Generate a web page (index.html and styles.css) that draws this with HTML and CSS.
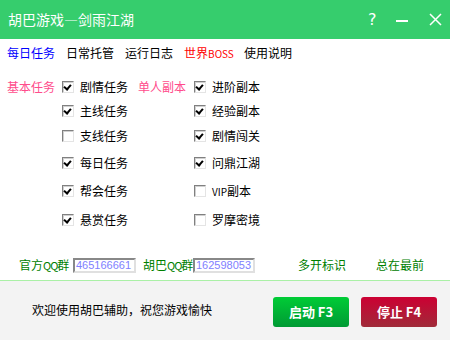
FILE: index.html
```html
<!DOCTYPE html>
<html lang="zh">
<head>
<meta charset="utf-8">
<title>胡巴游戏—剑雨江湖</title>
<link rel="stylesheet" href="styles.css">
</head>
<body>
<div class="window">
  <header class="titlebar">
    <span class="title">胡巴游戏—剑雨江湖</span>
    <div class="controls">
      <span class="help">?</span>
      <svg class="ctl" width="12" height="12" viewBox="0 0 12 12"><path d="M0 7h12" stroke="#fff" stroke-width="2"/></svg>
      <svg class="ctl" width="13" height="13" viewBox="0 0 13 13"><path d="M1 1L12 12M12 1L1 12" stroke="#fff" stroke-width="1.5"/></svg>
    </div>
  </header>
  <nav class="menu">
    <span class="tab active">每日任务</span>
    <span class="tab">日常托管</span>
    <span class="tab">运行日志</span>
    <span class="tab boss">世界<span class="lat">BOSS</span></span>
    <span class="tab">使用说明</span>
  </nav>
  <section class="tasks">
    <span class="group">基本任务</span>
    <label class="item"><span class="cb on"></span>剧情任务</label>
    <span class="group">单人副本</span>
    <label class="item"><span class="cb on"></span>进阶副本</label>

    <span></span>
    <label class="item"><span class="cb on"></span>主线任务</label>
    <span></span>
    <label class="item"><span class="cb on"></span>经验副本</label>

    <span></span>
    <label class="item"><span class="cb"></span>支线任务</label>
    <span></span>
    <label class="item"><span class="cb on"></span>剧情闯关</label>

    <span></span>
    <label class="item"><span class="cb on"></span>每日任务</label>
    <span></span>
    <label class="item"><span class="cb on"></span>问鼎江湖</label>

    <span></span>
    <label class="item"><span class="cb on"></span>帮会任务</label>
    <span></span>
    <label class="item"><span class="cb"></span><span><span class="lat">VIP</span>副本</span></label>

    <span></span>
    <label class="item"><span class="cb on"></span>悬赏任务</label>
    <span></span>
    <label class="item"><span class="cb"></span>罗摩密境</label>
  </section>
  <section class="qq">
    <span class="qlabel">官方<span class="lat q">QQ</span>群</span>
    <span class="field f1">465166661</span>
    <span class="qlabel">胡巴<span class="lat q">QQ</span>群</span>
    <span class="field f2">162598053</span>
    <span class="qlabel opt1">多开标识</span>
    <span class="qlabel opt2">总在最前</span>
  </section>
  <footer class="footer">
    <span class="welcome">欢迎使用胡巴辅助，祝您游戏愉快</span>
    <div class="buttons">
      <button class="btn start">启动 F3</button>
      <button class="btn stop">停止 F4</button>
    </div>
  </footer>
</div>
</body>
</html>
```
FILE: styles.css
```css
html, body {
  margin: 0;
  padding: 0;
  background: #fff;
}
.window {
  width: 450px;
  height: 340px;
  display: flex;
  flex-direction: column;
  font-family: "Noto Sans CJK SC", "Liberation Sans", sans-serif;
  font-size: 12px;
  color: #000;
  overflow: hidden;
}
.titlebar {
  height: 39px;
  background: #36cd6d;
  display: flex;
  align-items: center;
  padding-left: 8px;
  color: #fff;
  flex: none;
}
.title {
  font-size: 14px;
  line-height: 1;
  margin-top: -1px;
}
.controls {
  margin-left: auto;
  display: flex;
  align-items: center;
}
.help {
  font-family: "DejaVu Sans", sans-serif;
  font-size: 16px;
  width: 9px;
  margin-right: 19px;
  line-height: 1;
}
.ctl {
  display: block;
}
.ctl + .ctl {
  margin-left: 21px;
  margin-right: 8px;
}
.menu {
  display: flex;
  height: 24px;
  align-items: center;
  padding: 2px 0 0 7px;
  flex: none;
}
.tab {
  margin-right: 11px;
  line-height: 1;
  white-space: nowrap;
}
.tab.active { color: #0000ff; }
.tab.boss { color: #ff0000; width: 49px; margin-right: 11px; }
.lat {
  font-size: 10px;
}
.tasks {
  display: grid;
  grid-template-columns: 55px 76px 56px 1fr;
  grid-template-rows: 24px 24px 26px 28px 28px 30px;
  padding: 10px 0 0 7px;
  align-items: center;
  flex: none;
}
.group {
  color: #ff4c8c;
  line-height: 1;
}
.item {
  display: flex;
  align-items: center;
  gap: 6px;
  line-height: 1;
}
.cb {
  width: 10px;
  height: 10px;
  border: 1px solid;
  border-color: #808080 #e4e4e4 #e4e4e4 #808080;
  background: #fff;
  box-shadow: inset 1px 1px 0 #d0d0d0;
  position: relative;
  flex: none;
}
.cb.on::after {
  content: "";
  position: absolute;
  left: 2px;
  top: 1px;
  width: 3px;
  height: 5px;
  border: solid #000;
  border-width: 0 2px 2px 0;
  transform: rotate(40deg);
}
.qq {
  display: flex;
  align-items: center;
  height: 30px;
  margin-top: 15px;
  padding-left: 19px;
  flex: none;
}
.qlabel {
  color: #008000;
  line-height: 1;
  width: 48px;
  white-space: nowrap;
  flex: none;
}
.q {
  font-size: 11px;
  letter-spacing: -1px;
}
.field {
  box-sizing: border-box;
  height: 15px;
  border: 2px solid;
  border-color: #888 #e0e0e0 #e0e0e0 #888;
  color: #8080ff;
  font-family: "Liberation Sans", sans-serif;
  font-size: 11px;
  line-height: 11px;
  padding-left: 1px;
  flex: none;
}
.f1 { width: 63px; margin: 0 7px 0 6px; }
.f2 { width: 62px; margin: 0 0 0 2px; }
.opt1 { margin-left: 43px; }
.opt2 { margin-left: 30px; }
.footer {
  flex: 1;
  border-top: 1px solid #aaf0a6;
  background: #f3f3f3;
  display: flex;
  align-items: center;
  padding: 0 0 0 32px;
}
.welcome {
  line-height: 1;
  margin-top: -1px;
}
.buttons {
  margin-left: auto;
  margin-right: 13px;
  display: flex;
  gap: 12px;
}
.btn {
  width: 76px;
  height: 30px;
  border: none;
  border-radius: 3px;
  color: #fff;
  font-family: "Noto Sans CJK SC", "Liberation Sans", sans-serif;
  font-size: 13px;
  font-weight: bold;
  padding: 0;
  margin-top: 2px;
}
.start {
  background: linear-gradient(#00cc36, #009a34);
}
.stop {
  background: linear-gradient(#cc0033, #a02b39);
}
```
